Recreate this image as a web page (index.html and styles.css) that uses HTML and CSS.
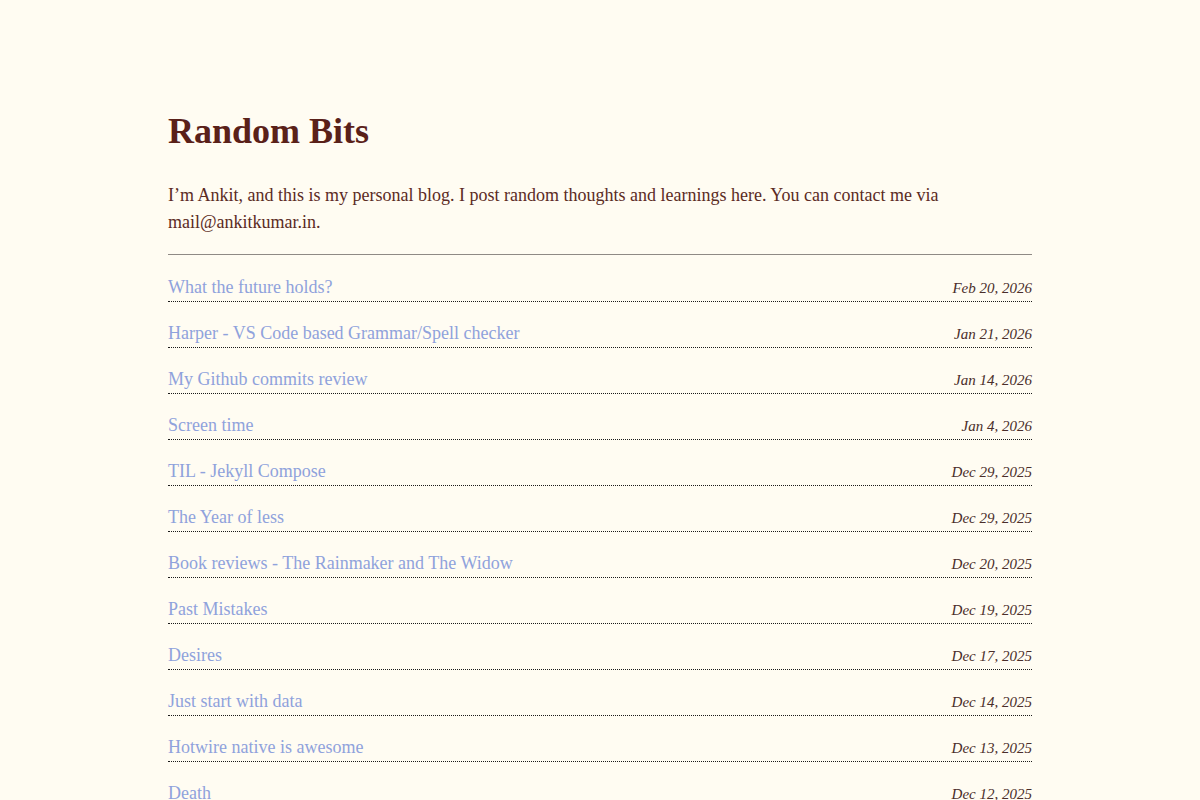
FILE: index.html
```html
<!DOCTYPE html>
<html lang="en">
<head>
<meta charset="utf-8">
<title>Random Bits</title>
<link rel="stylesheet" href="styles.css">
</head>
<body>
<main class="page">
  <h1 class="title">Random Bits</h1>
  <p class="intro">I’m Ankit, and this is my personal blog. I post random thoughts and learnings here. You can contact me via mail@ankitkumar.in.</p>
  <hr class="rule">
  <ul class="posts">
    <li class="post"><a class="post-link" href="#">What the future holds?</a><span class="post-date">Feb 20, 2026</span></li>
    <li class="post"><a class="post-link" href="#">Harper - VS Code based Grammar/Spell checker</a><span class="post-date">Jan 21, 2026</span></li>
    <li class="post"><a class="post-link" href="#">My Github commits review</a><span class="post-date">Jan 14, 2026</span></li>
    <li class="post"><a class="post-link" href="#">Screen time</a><span class="post-date">Jan 4, 2026</span></li>
    <li class="post"><a class="post-link" href="#">TIL - Jekyll Compose</a><span class="post-date">Dec 29, 2025</span></li>
    <li class="post"><a class="post-link" href="#">The Year of less</a><span class="post-date">Dec 29, 2025</span></li>
    <li class="post"><a class="post-link" href="#">Book reviews - The Rainmaker and The Widow</a><span class="post-date">Dec 20, 2025</span></li>
    <li class="post"><a class="post-link" href="#">Past Mistakes</a><span class="post-date">Dec 19, 2025</span></li>
    <li class="post"><a class="post-link" href="#">Desires</a><span class="post-date">Dec 17, 2025</span></li>
    <li class="post"><a class="post-link" href="#">Just start with data</a><span class="post-date">Dec 14, 2025</span></li>
    <li class="post"><a class="post-link" href="#">Hotwire native is awesome</a><span class="post-date">Dec 13, 2025</span></li>
    <li class="post"><a class="post-link" href="#">Death</a><span class="post-date">Dec 12, 2025</span></li>
  </ul>
</main>
</body>
</html>
```

FILE: styles.css
```css
html, body {
  margin: 0;
  padding: 0;
}
body {
  background: #fffcf2;
  color: #5b2b24;
  font-family: "Liberation Serif", "Times New Roman", serif;
  font-size: 18px;
  line-height: 27px;
}
.page {
  width: 864px;
  margin: 0 auto;
  padding-top: 101px;
}
.title {
  margin: 0;
  font-size: 36px;
  line-height: 60px;
  font-weight: 700;
  color: #5a2119;
}
.intro {
  margin: 21px 0 18px;
}
.rule {
  margin: 0;
  border: 0;
  border-top: 1px solid #8f8a85;
  height: 0;
}
.posts {
  list-style: none;
  margin: 0;
  padding: 1px 0 0;
}
.post {
  display: flex;
  justify-content: space-between;
  align-items: baseline;
  height: 27px;
  margin-top: 18px;
  border-bottom: 1px dotted #1a1a1a;
}
.post-link {
  color: #8fa2dc;
  text-decoration: none;
}
.post-date {
  font-style: italic;
  font-size: 15px;
  line-height: 20px;
  color: #4a2e2a;
}
```
